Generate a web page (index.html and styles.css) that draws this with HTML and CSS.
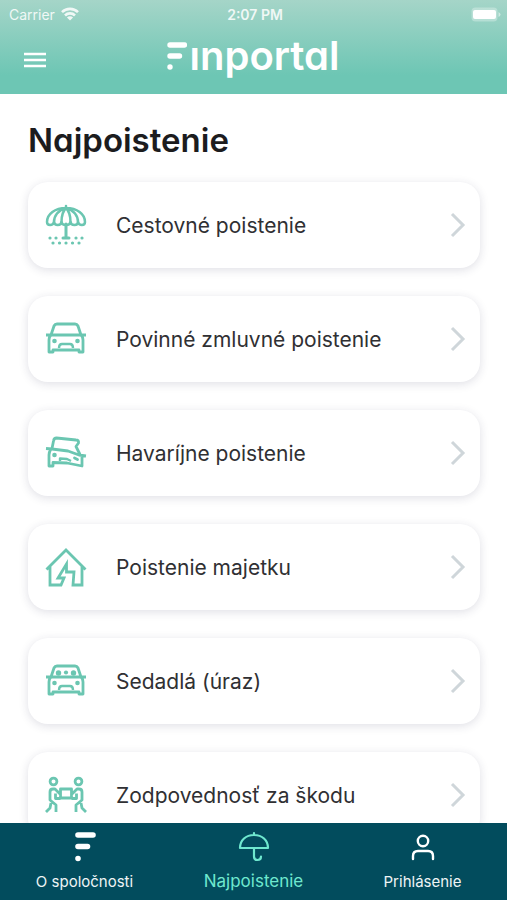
FILE: index.html
```html
<!DOCTYPE html>
<html lang="sk">
<head>
<meta charset="utf-8">
<meta name="viewport" content="width=device-width, initial-scale=1">
<title>Finportal</title>
<link rel="stylesheet" href="styles.css">
</head>
<body>
<header class="header">
  <div class="status">
    <span class="carrier">Carrier
      <svg width="18" height="14" viewBox="0 0 18 14" aria-hidden="true"><g fill="none" stroke="#fff" stroke-width="2.6"><path d="M1 5.2a11.3 11.3 0 0 1 16 0"/><path d="M4 8.5a7 7 0 0 1 10 0"/></g><path d="M9 13.6 5.9 10.5a4.4 4.4 0 0 1 6.2 0z" fill="#fff"/></svg>
    </span>
    <span class="time">2:07 PM</span>
    <svg class="battery" width="30" height="15" viewBox="0 0 30 15" aria-hidden="true"><rect x=".5" y=".5" width="26" height="14" rx="4" fill="#fff" opacity=".3"/><rect x="2" y="3" width="23" height="9" rx="2" fill="#fff"/><path d="M27.5 5v5q2-1 2-2.500t-2-2.500z" fill="#fff" opacity=".5"/></svg>
  </div>
  <div class="bar">
    <button class="menu" type="button" aria-label="Menu"><svg width="26" height="18" viewBox="0 0 26 18"><path d="M2 3h22M2 9h22M2 15h22" stroke="#fff" stroke-width="2.600"/></svg></button>
    <a class="brand" href="#" aria-label="Finportal">
      <svg width="20" height="36" viewBox="0 0 20 36"><path d="M3 7h14.500M3 18h9.500M3 29h.01" fill="none" stroke="#fff" stroke-width="5.400" stroke-linecap="round"/></svg><span>ınportal</span>
    </a>
  </div>
</header>
<main class="content">
  <h1>Najpoistenie</h1>
  <ul class="cards">
    <li><a class="card" href="#">
      <svg class="icon" viewBox="0 0 42 42"><g fill="none" stroke="#6bc6b1" stroke-width="2.500" stroke-linecap="round" stroke-linejoin="round"><path d="M21 2v2M2 18C2 10 10 4 21 4s19 6 19 14c0 4-6 4-7 0 0 4-7 4-7.500 0-.5 4-8.500 4-9 0-.5 4-7 4-7.500 0-1 4-7 4-7 0z"/><path d="M9 18c0-6 4-12 12-14-3 3-4.500 8-4.500 14M25.500 18c0-6-1.500-11-4.500-14 8 2 12 8 12 14"/><path d="M21 20v13M18 34h6" stroke-width="3"/><path d="M5 34h.01M11 34h.01M31 34h.01M37 34h.01M8 39h.01M14.500 39h.01M21 39h.01M27.500 39h.01M34 39h.01" stroke-width="3.200"/></g></svg>
      <span class="label">Cestovné poistenie</span><svg class="chevron" viewBox="0 0 16 26"><path d="m2 2 11 11L2 24"/></svg></a></li>
    <li><a class="card" href="#">
      <svg class="icon" viewBox="0 0 42 42"><g fill="none" stroke="#6bc6b1" stroke-width="2.800" stroke-linejoin="round"><path d="M6 17 9 8q1-2 3-2h18q2 0 3 2l3 9M1 17h40M6 17q-2 2-2 5v12h4v-2h26v2h4V22q0-3-2-5"/><path d="M14 30q0-4 3-4h8q3 0 3 4" stroke-width="2.400"/></g><circle cx="9.500" cy="23" r="2.300" fill="#6bc6b1"/><circle cx="32.500" cy="23" r="2.300" fill="#6bc6b1"/></svg>
      <span class="label">Povinné zmluvné poistenie</span><svg class="chevron" viewBox="0 0 16 26"><path d="m2 2 11 11L2 24"/></svg></a></li>
    <li><a class="card" href="#">
      <svg class="icon" viewBox="0 0 42 42"><g fill="none" stroke="#6bc6b1" stroke-width="2.800" stroke-linejoin="round"><path d="M7 16.500 8.500 9q.5-3 3-3L31 8q3 0 2.500 3L31 14.500l4 8M1 16.500l6 .5 16 2 11 4 7 1M6 17q-2 3-2 6v11h4v-3.500l14 .5 15 3V23"/><path d="M15 29v-2.500l7 .5 4 2" stroke-width="2.400"/><path d="m29.500 26 3 1.500" stroke-linecap="round"/></g><circle cx="9.500" cy="23" r="2.300" fill="#6bc6b1"/></svg>
      <span class="label">Havaríjne poistenie</span><svg class="chevron" viewBox="0 0 16 26"><path d="m2 2 11 11L2 24"/></svg></a></li>
    <li><a class="card" href="#">
      <svg class="icon" viewBox="0 0 42 42"><path d="M1.500 23.500 21 4l19.500 19.500M5 20v19h11l3-7h-6l8.500-14v8H29l-1 13h9V20" fill="none" stroke="#6bc6b1" stroke-width="2.800"/></svg>
      <span class="label">Poistenie majetku</span><svg class="chevron" viewBox="0 0 16 26"><path d="m2 2 11 11L2 24"/></svg></a></li>
    <li><a class="card" href="#">
      <svg class="icon" viewBox="0 0 42 42"><g fill="none" stroke="#6bc6b1" stroke-width="2.800" stroke-linejoin="round"><path d="M6 17 9 8q1-2 3-2h18q2 0 3 2l3 9M1 17h40M6 17q-2 2-2 5v12h4v-2h26v2h4V22q0-3-2-5"/><path d="M14 30q0-4 3-4h8q3 0 3 4" stroke-width="2.400"/></g><g fill="#6bc6b1"><circle cx="9.500" cy="23" r="2.300"/><circle cx="32.500" cy="23" r="2.300"/><circle cx="13.500" cy="13" r="2.700"/><circle cx="21" cy="12.500" r="2.100"/><circle cx="28.500" cy="13" r="2.700"/></g></svg>
      <span class="label">Sedadlá (úraz)</span><svg class="chevron" viewBox="0 0 16 26"><path d="m2 2 11 11L2 24"/></svg></a></li>
    <li><a class="card" href="#">
      <svg class="icon" viewBox="0 0 42 42"><g fill="none" stroke="#6bc6b1" stroke-width="2.800" stroke-linejoin="round"><circle cx="8.500" cy="7.500" r="3.400"/><circle cx="33.500" cy="7.500" r="3.400"/><path d="M15.500 15h11v9h-11zM15.500 24.500h-5v-5M26.500 24.500h5v-5M15.500 20.500 10 15H8q-3 0-3 3v8l6 5v7M26.500 20.500l5.500-5.500h2q3 0 3 3v8l-6 5v7M6 29l-1 5-4 4M36 29l1 5 4 4"/></g></svg>
      <span class="label">Zodpovednosť za škodu</span><svg class="chevron" viewBox="0 0 16 26"><path d="m2 2 11 11L2 24"/></svg></a></li>
  </ul>
</main>
<nav class="tabs">
  <a class="tab" href="#"><svg width="32" height="32" viewBox="0 0 32 32"><path d="M9 4h15M9 15.500h9.500M9 27.500h.01" fill="none" stroke="#fff" stroke-width="5.600" stroke-linecap="round"/></svg><span>O spoločnosti</span></a>
  <a class="tab active" href="#" aria-current="page"><svg width="32" height="32" viewBox="0 0 32 32"><path d="M2 17C2 9 8 4 16 4s14 5 14 13zM16 17v8.500q0 3.500 3.500 3.500t3.500-3.500M16 2v2" fill="none" stroke="#6fe8cf" stroke-width="2.200" stroke-linejoin="round" stroke-linecap="round"/></svg><span>Najpoistenie</span></a>
  <a class="tab" href="#"><svg width="32" height="32" viewBox="0 0 32 32"><g fill="none" stroke="#fff" stroke-width="2.400" stroke-linecap="round"><circle cx="16" cy="10" r="5.200"/><path d="M6 28v-3q0-5 5-5h10q5 0 5 5v3"/></g></svg><span>Prihlásenie</span></a>
</nav>
</body>
</html>
```
FILE: styles.css
```css
* { box-sizing: border-box; }
body {
  margin: 0;
  height: 100vh;
  display: flex;
  flex-direction: column;
  background: #fff;
  color: #303033;
  font-family: Inter, "Liberation Sans", sans-serif;
}
a { color: inherit; text-decoration: none; }
svg { display: block; flex: none; }
.header {
  flex: none;
  height: 94px;
  color: #fff;
  background: linear-gradient(#a5d5c8, #6dc6b4 80%);
}
.status {
  display: grid;
  grid-template-columns: 1fr auto 1fr;
  align-items: center;
  height: 28px;
  padding: 0 6px 0 9px;
  font-size: 14px;
}
.carrier { display: flex; align-items: center; gap: 6px; opacity: .85; }
.time { font-size: 14px; font-weight: 600; opacity: .85; }
.battery { justify-self: end; }
.bar {
  display: grid;
  grid-template-columns: 1fr auto 1fr;
  align-items: center;
  height: 64px;
  padding: 0 22px;
}
.menu { width: 26px; padding: 0; border: 0; background: none; }
.brand {
  display: flex;
  align-items: center;
  gap: 2px;
  padding-bottom: 8px;
  font-size: 40px;
  font-weight: 600;
  line-height: 40px;
  font-feature-settings: "cv11";
}
.content { flex: 1; min-height: 0; overflow-y: auto; scrollbar-width: none; padding: 26px 27px 28px 28px; }
h1 {
  margin: 0 0 22px;
  color: #1c1c1e;
  font-size: 33px;
  font-weight: 600;
  line-height: 40px;
  font-feature-settings: "cv11";
}
.cards { display: grid; gap: 28px; margin: 0; padding: 0; list-style: none; }
.card {
  display: flex;
  align-items: center;
  height: 86px;
  padding: 0 14px 0 17px;
  border-radius: 20px;
  background: #fff;
  box-shadow: 0 2px 10px rgba(40, 40, 80, .15);
}
.icon { width: 42px; height: 42px; }
.label { flex: 1; margin-left: 29px; font-size: 21px; }
.chevron { width: 16px; height: 26px; fill: none; stroke: #cfd6da; stroke-width: 3; }
.tabs {
  flex: none;
  display: grid;
  grid-template-columns: repeat(3, 1fr);
  height: 77px;
  padding-top: 8px;
  background: #024c5d;
  color: #eef4f5;
}
.tab { display: flex; flex-direction: column; align-items: center; gap: 9px; font-size: 15px; line-height: 20px; }
.active { gap: 8px; color: #6fe8cf; font-size: 17px; }
```
